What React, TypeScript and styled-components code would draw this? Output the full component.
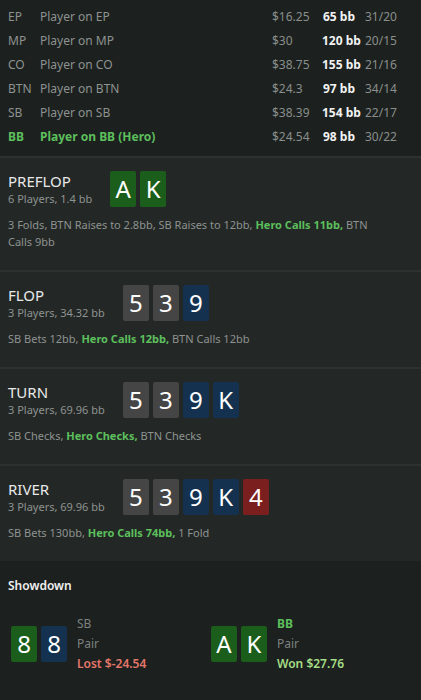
import React from 'react';
import styled, { createGlobalStyle } from 'styled-components';

const GlobalStyle = createGlobalStyle`
  html, body {
    margin: 0;
    padding: 0;
    background: #1c211f;
  }
  body {
    font-family: "Noto Sans", "Open Sans", sans-serif;
    color: #9a9d9c;
  }
`;

type CardColor = 'green' | 'gray' | 'blue' | 'red';

const cardBg: Record<CardColor, string> = {
  green: '#1b5e1c',
  gray: '#454545',
  blue: '#14324f',
  red: '#7a1e1e',
};

const Page = styled.div`
  width: 421px;
  min-height: 700px;
  background: #1c211f;
`;

const Players = styled.div`
  padding: 4px 0 8px 8px;
`;

const PlayerRow = styled.div<{ $hero?: boolean }>`
  display: grid;
  grid-template-columns: 32px 232px 50px 33px auto;
  height: 24px;
  align-items: center;
  font-size: 12px;
  color: ${p => (p.$hero ? '#5cbf5c' : '#8e9290')};
  font-weight: ${p => (p.$hero ? 700 : 400)};
`;

const Money = styled.span`
  color: #8a8e8c;
  font-weight: 400;
`;

const Stack = styled.span`
  color: #f2f2f2;
  font-weight: 700;
  text-align: right;
  white-space: nowrap;
`;

const Ratio = styled.span`
  color: #8a8e8c;
  font-weight: 400;
  padding-left: 10px;
`;

const Street = styled.section`
  background: #232826;
  border-top: 2px solid #2d3230;
  padding: 13px 8px 20px;
`;

const StreetHead = styled.div`
  display: flex;
  align-items: center;
  gap: 18px;
`;

const StreetTitle = styled.div`
  display: flex;
  flex-direction: column;
`;

const StreetName = styled.span`
  font-size: 15px;
  color: #e8e8e8;
  line-height: 19px;
`;

const StreetInfo = styled.span`
  font-size: 11px;
  color: #8e9290;
  line-height: 16px;
`;

const Cards = styled.div`
  display: flex;
  gap: 4px;
`;

const Card = styled.div<{ $color: CardColor }>`
  width: 26px;
  height: 36px;
  border-radius: 2px;
  background: ${p => cardBg[p.$color]};
  color: #ffffff;
  font-size: 24px;
  display: flex;
  align-items: center;
  justify-content: center;
  line-height: 1;
`;

const Actions = styled.p`
  margin: 9px 0 0;
  font-size: 11px;
  line-height: 17px;
  color: #8e9290;
`;

const Hero = styled.b`
  color: #5cbf5c;
`;

const Showdown = styled.section`
  background: #1c211f;
  padding: 16px 8px 20px;
`;

const ShowdownTitle = styled.div`
  font-size: 12px;
  font-weight: 600;
  color: #f0f0f0;
  margin-bottom: 20px;
`;

const Hands = styled.div`
  display: grid;
  grid-template-columns: 200px 200px;
  padding-left: 3px;
`;

const Hand = styled.div`
  display: flex;
  align-items: center;
  gap: 10px;
`;

const HandInfo = styled.div`
  display: flex;
  flex-direction: column;
  font-size: 12px;
  line-height: 20px;
`;

const Seat = styled.span<{ $hero?: boolean }>`
  color: ${p => (p.$hero ? '#5cbf5c' : '#7c807e')};
  font-weight: ${p => (p.$hero ? 700 : 400)};
`;

const Result = styled.span<{ $won?: boolean }>`
  color: ${p => (p.$won ? '#a6df86' : '#e4766a')};
  font-weight: 600;
`;

const players = [
  { pos: 'EP', name: 'Player on EP', money: '$16.25', stack: '65 bb', ratio: '31/20' },
  { pos: 'MP', name: 'Player on MP', money: '$30', stack: '120 bb', ratio: '20/15' },
  { pos: 'CO', name: 'Player on CO', money: '$38.75', stack: '155 bb', ratio: '21/16' },
  { pos: 'BTN', name: 'Player on BTN', money: '$24.3', stack: '97 bb', ratio: '34/14' },
  { pos: 'SB', name: 'Player on SB', money: '$38.39', stack: '154 bb', ratio: '22/17' },
  { pos: 'BB', name: 'Player on BB (Hero)', money: '$24.54', stack: '98 bb', ratio: '30/22', hero: true },
];

type C = [string, CardColor];

const board: C[] = [['5', 'gray'], ['3', 'gray'], ['9', 'blue'], ['K', 'blue'], ['4', 'red']];

const CardList = ({ cards }: { cards: C[] }) => (
  <Cards>
    {cards.map(([v, c], i) => (
      <Card key={i} $color={c}>{v}</Card>
    ))}
  </Cards>
);

const streets = [
  {
    name: 'PREFLOP',
    info: '6 Players, 1.4 bb',
    cards: [['A', 'green'], ['K', 'green']] as C[],
    actions: (
      <>3 Folds, BTN Raises to 2.8bb, SB Raises to 12bb, <Hero>Hero Calls 11bb,</Hero> BTN<br />Calls 9bb</>
    ),
  },
  {
    name: 'FLOP',
    info: '3 Players, 34.32 bb',
    cards: board.slice(0, 3),
    actions: <>SB Bets 12bb, <Hero>Hero Calls 12bb,</Hero> BTN Calls 12bb</>,
  },
  {
    name: 'TURN',
    info: '3 Players, 69.96 bb',
    cards: board.slice(0, 4),
    actions: <>SB Checks, <Hero>Hero Checks,</Hero> BTN Checks</>,
  },
  {
    name: 'RIVER',
    info: '3 Players, 69.96 bb',
    cards: board,
    actions: <>SB Bets 130bb, <Hero>Hero Calls 74bb,</Hero> 1 Fold</>,
  },
];

export default function App() {
  return (
    <Page>
      <GlobalStyle />
      <Players>
        {players.map(p => (
          <PlayerRow key={p.pos} $hero={p.hero}>
            <span>{p.pos}</span>
            <span>{p.name}</span>
            <Money>{p.money}</Money>
            <Stack>{p.stack}</Stack>
            <Ratio>{p.ratio}</Ratio>
          </PlayerRow>
        ))}
      </Players>
      {streets.map(s => (
        <Street key={s.name}>
          <StreetHead>
            <StreetTitle>
              <StreetName>{s.name}</StreetName>
              <StreetInfo>{s.info}</StreetInfo>
            </StreetTitle>
            <CardList cards={s.cards} />
          </StreetHead>
          <Actions>{s.actions}</Actions>
        </Street>
      ))}
      <Showdown>
        <ShowdownTitle>Showdown</ShowdownTitle>
        <Hands>
          <Hand>
            <CardList cards={[['8', 'green'], ['8', 'blue']]} />
            <HandInfo>
              <Seat>SB</Seat>
              <Seat>Pair</Seat>
              <Result>Lost $-24.54</Result>
            </HandInfo>
          </Hand>
          <Hand>
            <CardList cards={[['A', 'green'], ['K', 'green']]} />
            <HandInfo>
              <Seat $hero>BB</Seat>
              <Seat>Pair</Seat>
              <Result $won>Won $27.76</Result>
            </HandInfo>
          </Hand>
        </Hands>
      </Showdown>
    </Page>
  );
}
